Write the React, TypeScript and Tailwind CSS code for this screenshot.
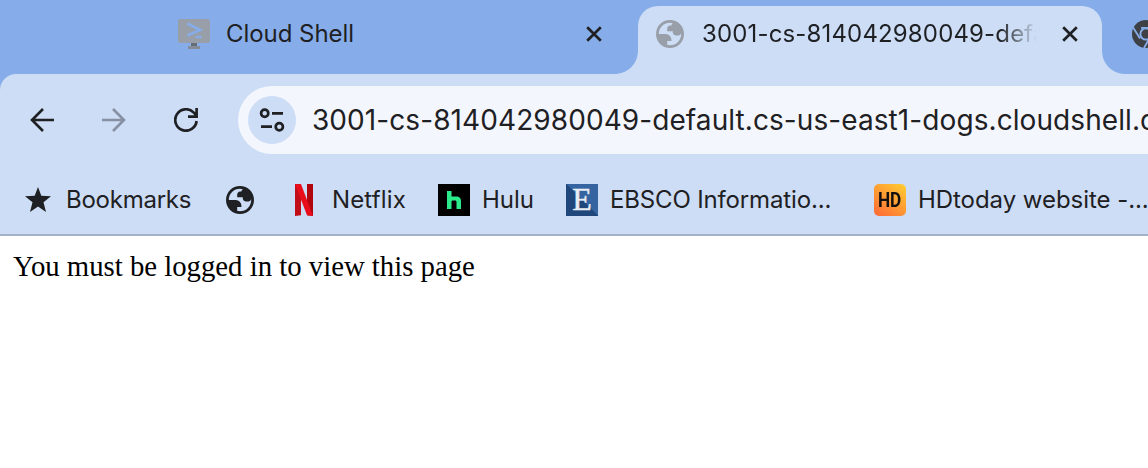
import React from "react";

const ui = "font-['Inter',sans-serif]";

function Globe({ className }: { className: string }) {
  return (
    <svg viewBox="80 -880 800 800" className={className}>
      <path
        fill="currentColor"
        d="M480-80q-83 0-156-31.500T197-197q-54-54-85.500-127T80-480q0-83 31.500-156T197-763q54-54 127-85.500T480-880q83 0 156 31.500T763-763q54 54 85.500 127T880-480q0 83-31.500 156T763-197q-54 54-127 85.500T480-80Zm0-80q134 0 227-93t93-227q0-7-.5-14.500T799-507q-5 29-27 48t-52 19h-80q-33 0-56.500-23.500T560-520v-40H400v-80q0-33 23.500-56.500T480-720h40q0-23 12.500-40.500T563-789q-20-5-40.500-8t-42.500-3q-134 0-227 93t-93 227h200q66 0 113 47t47 113v40H400v110q20 5 39.500 7.500T480-160Z"
      />
    </svg>
  );
}

function Close() {
  return (
    <svg viewBox="0 0 16 16" className="size-4 shrink-0" fill="none" stroke="#1f2023" strokeWidth="2.700">
      <path d="M1.200 1.200L14.800 14.800M14.800 1.200L1.200 14.800" />
    </svg>
  );
}

function TabStrip() {
  return (
    <div className="flex h-[74px] shrink-0 bg-[#86ade9]">
      <div className="flex h-[68px] w-[614px] shrink-0 items-center pl-[178px] pr-3">
        <svg viewBox="0 0 32 32" className="size-8 shrink-0">
          <rect y="1" width="32" height="24" rx="2.500" fill="#999fa8" />
          <path d="M13 25h6v3H13z" fill="#666d77" />
          <path d="M10 28h12v3H10z" fill="#858c96" />
          <path d="M9.500 5.500L22 12L9.500 17.500" fill="none" stroke="#86ade9" strokeWidth="2.800" />
          <path d="M17.500 19h6" stroke="#86ade9" strokeWidth="2.400" />
        </svg>
        <span className="ml-4 grow whitespace-nowrap text-[24px] tracking-[-0.05px] text-[#1f2023]">Cloud Shell</span>
        <Close />
      </div>
      <svg viewBox="0 0 24 74" className="h-[74px] w-6 shrink-0">
        <path d="M0 74C14 74 24 64 24 50V74z" fill="#ccddf5" />
      </svg>
      <div className="mt-1.5 flex h-[68px] w-[464px] shrink-0 rounded-t-[20px] bg-[#ccddf5]">
        <div className="flex h-14 grow items-center pl-[18px] pr-6">
          <Globe className="size-7 shrink-0 text-[#999fa8]" />
          <div className="ml-[18px] w-[338px] overflow-hidden whitespace-nowrap text-[24px] tracking-[0.15px] text-[#1f2023] [mask-image:linear-gradient(to_right,#000_88%,transparent_99%)]">
            3001-cs-814042980049-default
          </div>
          <div className="ml-auto">
            <Close />
          </div>
        </div>
      </div>
      <svg viewBox="0 0 46 74" className="h-[74px] w-[46px] shrink-0">
        <path d="M0 50C0 64 10 74 24 74H0z" fill="#ccddf5" />
        <g transform="translate(44 34)" fill="none">
          <circle r="14" fill="#3d4146" />
          <path d="M-13.500 -7.500L-6 4.500M-5 -6.200H14M3 5L-2 14" stroke="#86ade9" strokeWidth="1.800" />
          <circle r="6.600" fill="#86ade9" />
          <circle r="4.700" fill="#3d4146" />
        </g>
      </svg>
    </div>
  );
}

function Toolbar() {
  return (
    <div className="flex h-[92px] shrink-0 items-center bg-[#86ade9]">
      <div className="flex h-full w-full items-center overflow-hidden rounded-tl-[16px] bg-[#ccddf5] pl-[30px]">
        <svg viewBox="0 0 24 24" className="size-6 shrink-0" fill="none" stroke="#1f2023" strokeWidth="2.600">
          <path d="M24 12H2M13 1L2 12L13 23" />
        </svg>
        <svg viewBox="0 0 24 24" className="ml-12 size-6 shrink-0" fill="none" stroke="#8690a2" strokeWidth="2.600">
          <path d="M0 12H22M11 1L22 12L11 23" />
        </svg>
        <svg viewBox="0 0 24 24" className="ml-12 size-6 shrink-0" fill="none" stroke="#1f2023" strokeWidth="2.700">
          <path d="M22.600 13A10.700 10.700 0 1 1 19.500 4.400L22.600 7.600M22.600 0V8.600H14" />
        </svg>
        <div className="ml-10 flex h-[68px] grow items-center overflow-hidden rounded-l-full bg-[#f3f7fd] pl-[10px]">
          <div className="flex size-12 shrink-0 items-center justify-center rounded-full bg-[#ccddf5]">
            <svg viewBox="0 0 26 24" className="h-6 w-[26px]" fill="none" stroke="#1f2023" strokeWidth="2.700">
              <circle cx="5.700" cy="5.300" r="3.600" />
              <circle cx="20.300" cy="18.700" r="3.600" />
              <path d="M13 5.300H24M2 18.700H13" />
            </svg>
          </div>
          <span className="ml-4 whitespace-nowrap text-[28px] tracking-[0.08px] text-[#1f2023]">
            3001-cs-814042980049-default.cs-us-east1-dogs.cloudshell.dev
          </span>
        </div>
      </div>
    </div>
  );
}

function BookmarkLabel({ children, className }: { children: React.ReactNode; className: string }) {
  return <span className={`${className} shrink-0 whitespace-nowrap text-[24px] text-[#1f2023]`}>{children}</span>;
}

function Bookmarks() {
  return (
    <div className="flex h-[70px] shrink-0 items-center overflow-hidden border-b-2 border-[#a3b1c7] bg-[#ccddf5] pl-[25px]">
      <svg viewBox="0 0 26 25" className="mb-px h-[25px] w-[26px] shrink-0">
        <path d="M13 0L16.300 8.700L26 9.200L18.500 15.200L21 25L13 19.500L5 25L7.500 15.200L0 9.200L9.700 8.700z" fill="#1f2023" />
      </svg>
      <BookmarkLabel className="ml-[15px] w-[160px] tracking-[-0.25px]">Bookmarks</BookmarkLabel>
      <Globe className="size-7 shrink-0 text-[#1f2023]" />
      <svg viewBox="0 0 18 32" className="ml-[41px] h-8 w-[18px] shrink-0">
        <path d="M0 0H6V31.300L0 32z" fill="#c00d17" />
        <path d="M12 0H18V32L12 31.300z" fill="#b1060f" />
        <path d="M0 0H6L18 32L12 31.300z" fill="#e90c1a" />
      </svg>
      <BookmarkLabel className="ml-[19px] w-[106px] tracking-[0.15px]">Netflix</BookmarkLabel>
      <svg viewBox="0 0 32 32" className="size-8 shrink-0">
        <path fill="#000" d="M0 0h32v32H0z" />
        <path d="M9 7h4.500v5.500h4.500c3.500 0 5 2 5 4.500v8h-4.500v-7c0-1-.5-1.500-1.500-1.500h-2c-1 0-1.500.5-1.500 1.500v7H9z" fill="#2bea8a" />
      </svg>
      <BookmarkLabel className="ml-3 w-[84px]">Hulu</BookmarkLabel>
      <div className="flex size-8 shrink-0 items-center justify-center bg-[linear-gradient(45deg,#20477c_50%,#3564a0_50%)] pb-0.5 font-['Liberation_Serif',serif] text-[32px] leading-none text-[#e8edf4] [-webkit-text-stroke:0.5px_#e8edf4]">
        E
      </div>
      <BookmarkLabel className="ml-3 w-[264px] tracking-[-0.15px]">EBSCO Informatio...</BookmarkLabel>
      <div className="flex size-8 shrink-0 items-center justify-center rounded-[5px] bg-[linear-gradient(35deg,#ff6735,#ffce32)] font-[Roboto,sans-serif] text-[20px] font-bold leading-none text-[#111]">
        <span className="scale-x-[0.86]">HD</span>
      </div>
      <BookmarkLabel className="ml-3 tracking-[-0.05px]">HDtoday website -...</BookmarkLabel>
    </div>
  );
}

export default function App() {
  return (
    <div className={`${ui} flex h-[468px] w-[1148px] flex-col overflow-hidden bg-white`}>
      <TabStrip />
      <Toolbar />
      <Bookmarks />
      <main className="px-[13px] pt-[13px] font-['Liberation_Serif',serif] text-[28.75px] leading-[34px] text-black">
        You must be logged in to view this page
      </main>
    </div>
  );
}
